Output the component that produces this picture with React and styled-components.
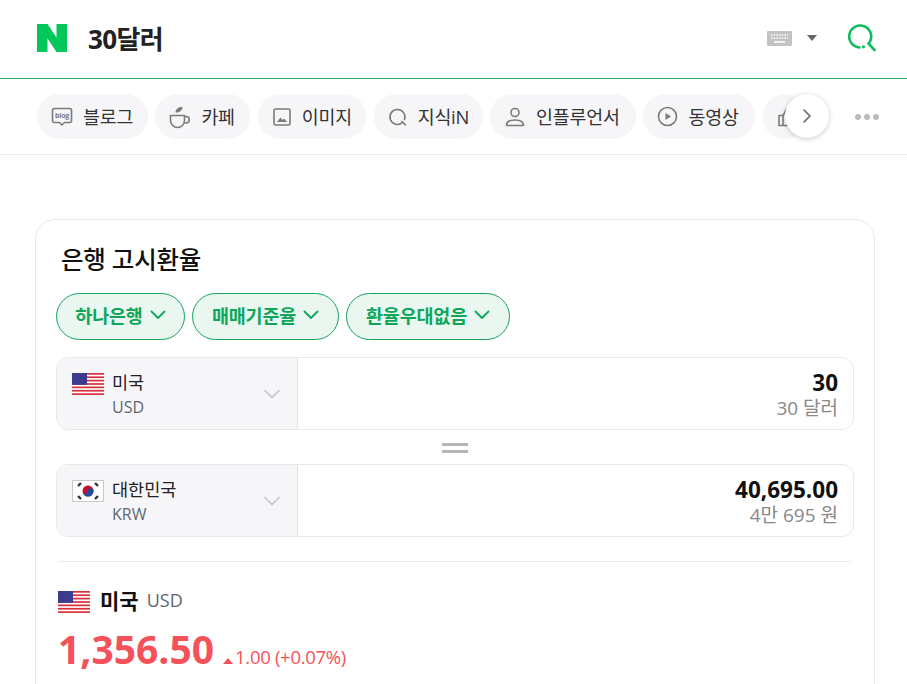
import styled, { createGlobalStyle } from "styled-components";

const GlobalStyle = createGlobalStyle`
    html, body {
        margin: 0;
        height: 100%;
        overflow: hidden;
        background-color: #fff;
    }
    body {
        font-family: "Open Sans", "Noto Sans CJK KR", sans-serif;
        color: #222;
    }
`;

const Header = styled.header`
    box-sizing: border-box;
    border-bottom: 1px solid #2fa86d;
    height: 79px;
    padding: 0 31px 0 37px;
    display: flex;
    align-items: center;
`;

const Logo = styled.svg`
    width: 30px;
    height: 28px;
    flex: none;
    margin-bottom: 2px;
`;

const Query = styled.h1`
    margin: 0 0 2px 21px;
    font-size: 26px;
    font-weight: 700;
    letter-spacing: -0.6px;
    color: #222;
    flex: 1;
`;

const KeyboardWrap = styled.div`
    display: flex;
    align-items: center;
    gap: 15px;
    margin-right: 31px;
    margin-bottom: 2px;
`;

const Caret = styled.span`
    width: 0;
    height: 0;
    border-left: 5.5px solid transparent;
    border-right: 5.5px solid transparent;
    border-top: 6px solid #666;
`;

const TabBar = styled.nav`
    position: relative;
    height: 76px;
    box-sizing: border-box;
    border-bottom: 1px solid #ebebeb;
    padding: 15px 0 0 37px;
    display: flex;
    gap: 7.4px;
`;

const Chip = styled.a`
    flex: none;
    height: 45px;
    width: ${(p) => p.$w}px;
    box-sizing: border-box;
    border-radius: 23px;
    background-color: #f6f6f8;
    display: flex;
    align-items: center;
    gap: 10px;
    padding-left: 14px;
    font-size: 18.4px;
    letter-spacing: -0.2px;
    color: #333;
    white-space: nowrap;

    span {
        margin-bottom: 2px;
    }
`;

const NextButton = styled.button`
    position: absolute;
    left: 785px;
    top: 15px;
    width: 44px;
    height: 44px;
    border-radius: 50%;
    border: none;
    padding: 0;
    background-color: #fff;
    box-shadow: 0 1px 5px rgba(0, 0, 0, 0.22);
    display: flex;
    align-items: center;
    justify-content: center;
`;

const More = styled.div`
    position: absolute;
    left: 855px;
    top: 35px;
    display: flex;
    gap: 3px;

    span {
        width: 6px;
        height: 6px;
        border-radius: 50%;
        background-color: #bbb;
    }
`;

const Main = styled.main`
    padding: 64px 32px 0 35px;
`;

const Card = styled.section`
    box-sizing: border-box;
    border: 1px solid #e6e8ea;
    border-radius: 20px;
    padding: 23px 20px 0 20px;
    height: 640px;
`;

const Title = styled.h2`
    margin: 0 0 0 5px;
    font-size: 24.5px;
    line-height: 34px;
    font-weight: 500;
    letter-spacing: -0.2px;
    color: #111;
`;

const Pills = styled.div`
    display: flex;
    gap: 7px;
    margin-top: 16px;
`;

const Pill = styled.button`
    height: 47px;
    width: ${(p) => p.$w}px;
    box-sizing: border-box;
    border: 1px solid #17a35e;
    border-radius: 24px;
    background-color: #e9f7f0;
    color: #0ea65a;
    font: 700 18.5px "Open Sans", "Noto Sans CJK KR", sans-serif;
    letter-spacing: -0.2px;
    display: flex;
    align-items: center;
    justify-content: center;
    gap: 7px;
    padding: 0 0 3px;
`;

const Converter = styled.div`
    display: grid;
    grid-template-columns: 241px 1fr;
    height: 73px;
    box-sizing: border-box;
    border: 1px solid #e8e9eb;
    border-radius: 12px;
    overflow: hidden;
    margin-top: ${(p) => p.$top}px;
`;

const Currency = styled.div`
    background-color: #f6f6f8;
    border-right: 1px solid #e4e5e7;
    padding: 12px 0 0 15px;
    display: flex;
    position: relative;
`;

const FlagBox = styled.svg`
    width: 32px;
    height: 22px;
    flex: none;
    margin-top: ${(p) => p.$top || 3}px;
`;

const CurrencyText = styled.div`
    margin-left: 8px;
    font-size: 17.5px;
    line-height: 25px;
    color: #222;

    small {
        display: block;
        font-size: 16px;
        line-height: 24px;
        color: #5f6670;
    }
`;

const Chevron = styled.svg`
    position: absolute;
    left: 207px;
    top: 31px;
    width: 16px;
    height: 10px;
`;

const Amount = styled.div`
    text-align: right;
    padding: 11px 15px 0 0;

    strong {
        display: block;
        font-size: 22.5px;
        line-height: 27px;
        font-weight: 700;
        color: #111;
    }

    span {
        display: block;
        font-size: 19px;
        line-height: 25px;
        color: #888;
    }
`;

const EqualsRow = styled.div`
    height: 34px;
    display: flex;
    flex-direction: column;
    align-items: center;
    justify-content: center;
    gap: 4px;
    padding-top: 1px;
    box-sizing: border-box;

    span {
        width: 26px;
        height: 3px;
        background-color: #b5b5b5;
    }
`;

const Divider = styled.hr`
    border: none;
    border-top: 1px solid #ececec;
    margin: 24px 4px 0 2px;
`;

const CountryRow = styled.div`
    display: flex;
    align-items: center;
    margin: 23px 0 0 2px;
    height: 30px;

    strong {
        margin-left: 10px;
        font-size: 21px;
        font-weight: 700;
        color: #111;
    }

    span {
        margin-left: 8px;
        font-size: 18px;
        color: #5f6670;
    }
`;

const RateRow = styled.div`
    display: flex;
    align-items: baseline;
    margin: 9px 0 0 2px;
    color: #f5515a;

    strong {
        font-size: 39px;
        line-height: 50px;
        font-weight: 700;
    }

    span {
        margin-left: 9px;
        font-size: 18.5px;
        letter-spacing: -0.3px;
        display: flex;
        align-items: baseline;
        gap: 2px;
    }

    i {
        width: 0;
        height: 0;
        border-left: 5px solid transparent;
        border-right: 5px solid transparent;
        border-bottom: 6px solid #f5515a;
    }
`;

const stroke = { fill: "none", stroke: "#7b7b7b", strokeWidth: 1.6, strokeLinecap: "round", strokeLinejoin: "round" };

const BlogIcon = () => (
	<svg width="22" height="20" viewBox="0 0 22 20">
		<path d="M3.500 1.500h15a2 2 0 0 1 2 2v10a2 2 0 0 1-2 2h-5l-2.500 2.500-2.500-2.500h-5a2 2 0 0 1-2-2v-10a2 2 0 0 1 2-2z" {...stroke} />
		<text x="11" y="11" textAnchor="middle" fontSize="7" fontWeight="700" fontFamily="Open Sans" fill="#7b7b7b">blog</text>
	</svg>
);
const CafeIcon = () => (
	<svg width="22" height="24" viewBox="0 0 22 24">
		<path d="M1.500 10.500h14v5a7 7 0 0 1-14 0z M15.500 11.500h1.500a3 3 0 0 1 0 6.500h-2" {...stroke} />
		<path d="M6.500 7.500c0-3.500 3-5.500 7-5.500 0 3.500-3 5.500-7 5.500z" fill="#7b7b7b" />
	</svg>
);
const ImageIcon = () => (
	<svg width="20" height="20" viewBox="0 0 20 20">
		<rect x="2" y="2" width="16" height="16" rx="1.500" {...stroke} />
		<path d="M5 15l3.500-4.500 2 2.500 1.500-1.500 3 3.500z" fill="#7b7b7b" />
	</svg>
);
const KinIcon = () => (
	<svg width="20" height="20" viewBox="0 0 20 20">
		<path d="M14.500 15.500a7.500 7.500 0 1 1 2-3" {...stroke} />
		<path d="M14 14.500l3.500 3.500" {...stroke} />
	</svg>
);
const PersonIcon = () => (
	<svg width="22" height="22" viewBox="0 0 22 22">
		<circle cx="11" cy="6.500" r="4" {...stroke} />
		<path d="M2.500 19.500c0-4 3.500-5.500 8.500-5.500s8.500 1.500 8.500 5.500z" {...stroke} />
	</svg>
);
const PlayIcon = () => (
	<svg width="21" height="21" viewBox="0 0 21 21">
		<circle cx="10.500" cy="10.500" r="9" {...stroke} />
		<path d="M8.500 7l5.500 3.500-5.500 3.500z" fill="#7b7b7b" />
	</svg>
);
const ThumbIcon = () => (
	<svg width="22" height="22" viewBox="0 0 22 22">
		<path d="M2 9.500h4v10h-4z M6 9.500l4-7c2 0 3 1 2.500 3l-.5 3h6v11h-12" {...stroke} />
	</svg>
);

const UsFlag = ({ top }) => (
	<FlagBox $top={top} viewBox="0 0 32 22">
		<rect width="32" height="22" fill="#fff" />
		{[0, 1, 2, 3, 4, 5, 6].map((i) => (
			<rect key={i} y={i * 3.38} width="32" height="1.69" fill="#d8303a" />
		))}
		<rect width="15" height="11.800" fill="#3c3b8e" />
	</FlagBox>
);

const KrFlag = () => (
	<FlagBox viewBox="0 0 32 22">
		<rect x="0.500" y="0.500" width="31" height="21" fill="#fff" stroke="#c9c9c9" />
		<circle cx="16" cy="11" r="5.500" fill="#c8102e" />
		<path d="M10.500 11a2.750 2.750 0 0 0 5.500 0 2.750 2.750 0 0 1 5.500 0 5.500 5.500 0 0 1-11 0z" fill="#1d4f9c" />
		<g stroke="#333" strokeWidth="2.400" strokeLinecap="butt">
			<path d="M6 6l3-3" />
			<path d="M23 3l3 3" />
			<path d="M6 16l3 3" />
			<path d="M23 19l3-3" />
		</g>
	</FlagBox>
);

const PillChevron = () => (
	<svg width="16" height="10" viewBox="0 0 16 10">
		<path d="M1.500 1.500L8 8l6.500-6.500" fill="none" stroke="#0ea65a" strokeWidth="1.800" strokeLinecap="round" strokeLinejoin="round" />
	</svg>
);

const SelectChevron = () => (
	<Chevron viewBox="0 0 16 10">
		<path d="M1 1.500l7 7 7-7" fill="none" stroke="#c4c5c8" strokeWidth="1.700" strokeLinecap="round" strokeLinejoin="round" />
	</Chevron>
);

const tabs = [
	{ label: "블로그", icon: <BlogIcon />, w: 111 },
	{ label: "카페", icon: <CafeIcon />, w: 95 },
	{ label: "이미지", icon: <ImageIcon />, w: 108.5 },
	{ label: "지식iN", icon: <KinIcon />, w: 109 },
	{ label: "인플루언서", icon: <PersonIcon />, w: 146 },
	{ label: "동영상", icon: <PlayIcon />, w: 112 },
	{ icon: <ThumbIcon />, w: 44 },
];

const App = () => {
	return (
		<>
			<GlobalStyle />
			<Header>
				<Logo viewBox="0 0 30 28">
					<path d="M0 0h10.500l9 13.500V0H30v28H19.500l-9-13.500V28H0z" fill="#03c75a" />
				</Logo>
				<Query>30달러</Query>
				<KeyboardWrap>
					<svg width="25" height="15" viewBox="0 0 25 15">
						<rect width="25" height="15" rx="1" fill="#c3c3c3" />
						<path d="M4 4h17M4 7h17" stroke="#fff" strokeWidth="1.500" strokeDasharray="1.500 1.200" />
						<path d="M7 11h11" stroke="#fff" strokeWidth="1.500" />
					</svg>
					<Caret />
				</KeyboardWrap>
				<svg width="28" height="28" viewBox="0 0 28 28" style={{ marginBottom: 2 }}>
					<path d="M11.500 23.500a11 11 0 1 1 9.800-4.800" fill="none" stroke="#11bb5e" strokeWidth="2.600" strokeLinecap="round" />
					<circle cx="15.500" cy="22.800" r="1.600" fill="#11bb5e" />
					<path d="M20.500 19.500l6 6.500" stroke="#11bb5e" strokeWidth="2.600" strokeLinecap="round" />
				</svg>
			</Header>
			<TabBar>
				{tabs.map((tab, i) => (
					<Chip key={i} $w={tab.w}>
						{tab.icon}
						{tab.label && <span>{tab.label}</span>}
					</Chip>
				))}
				<NextButton aria-label="next">
					<svg width="10" height="16" viewBox="0 0 10 16">
						<path d="M2 2l6 6-6 6" fill="none" stroke="#666" strokeWidth="1.600" strokeLinecap="round" strokeLinejoin="round" />
					</svg>
				</NextButton>
				<More>
					<span />
					<span />
					<span />
				</More>
			</TabBar>
			<Main>
				<Card>
					<Title>은행 고시환율</Title>
					<Pills>
						<Pill $w={129}>하나은행 <PillChevron /></Pill>
						<Pill $w={147}>매매기준율 <PillChevron /></Pill>
						<Pill $w={164}>환율우대없음 <PillChevron /></Pill>
					</Pills>
					<Converter $top={17}>
						<Currency>
							<UsFlag />
							<CurrencyText>
								미국
								<small>USD</small>
							</CurrencyText>
							<SelectChevron />
						</Currency>
						<Amount>
							<strong>30</strong>
							<span>30 달러</span>
						</Amount>
					</Converter>
					<EqualsRow>
						<span />
						<span />
					</EqualsRow>
					<Converter $top={0}>
						<Currency>
							<KrFlag />
							<CurrencyText>
								대한민국
								<small>KRW</small>
							</CurrencyText>
							<SelectChevron />
						</Currency>
						<Amount>
							<strong>40,695.00</strong>
							<span>4만 695 원</span>
						</Amount>
					</Converter>
					<Divider />
					<CountryRow>
						<UsFlag top={0} />
						<strong>미국</strong>
						<span>USD</span>
					</CountryRow>
					<RateRow>
						<strong>1,356.50</strong>
						<span>
							<i />
							1.00 (+0.07%)
						</span>
					</RateRow>
				</Card>
			</Main>
		</>
	);
};

export default App;
